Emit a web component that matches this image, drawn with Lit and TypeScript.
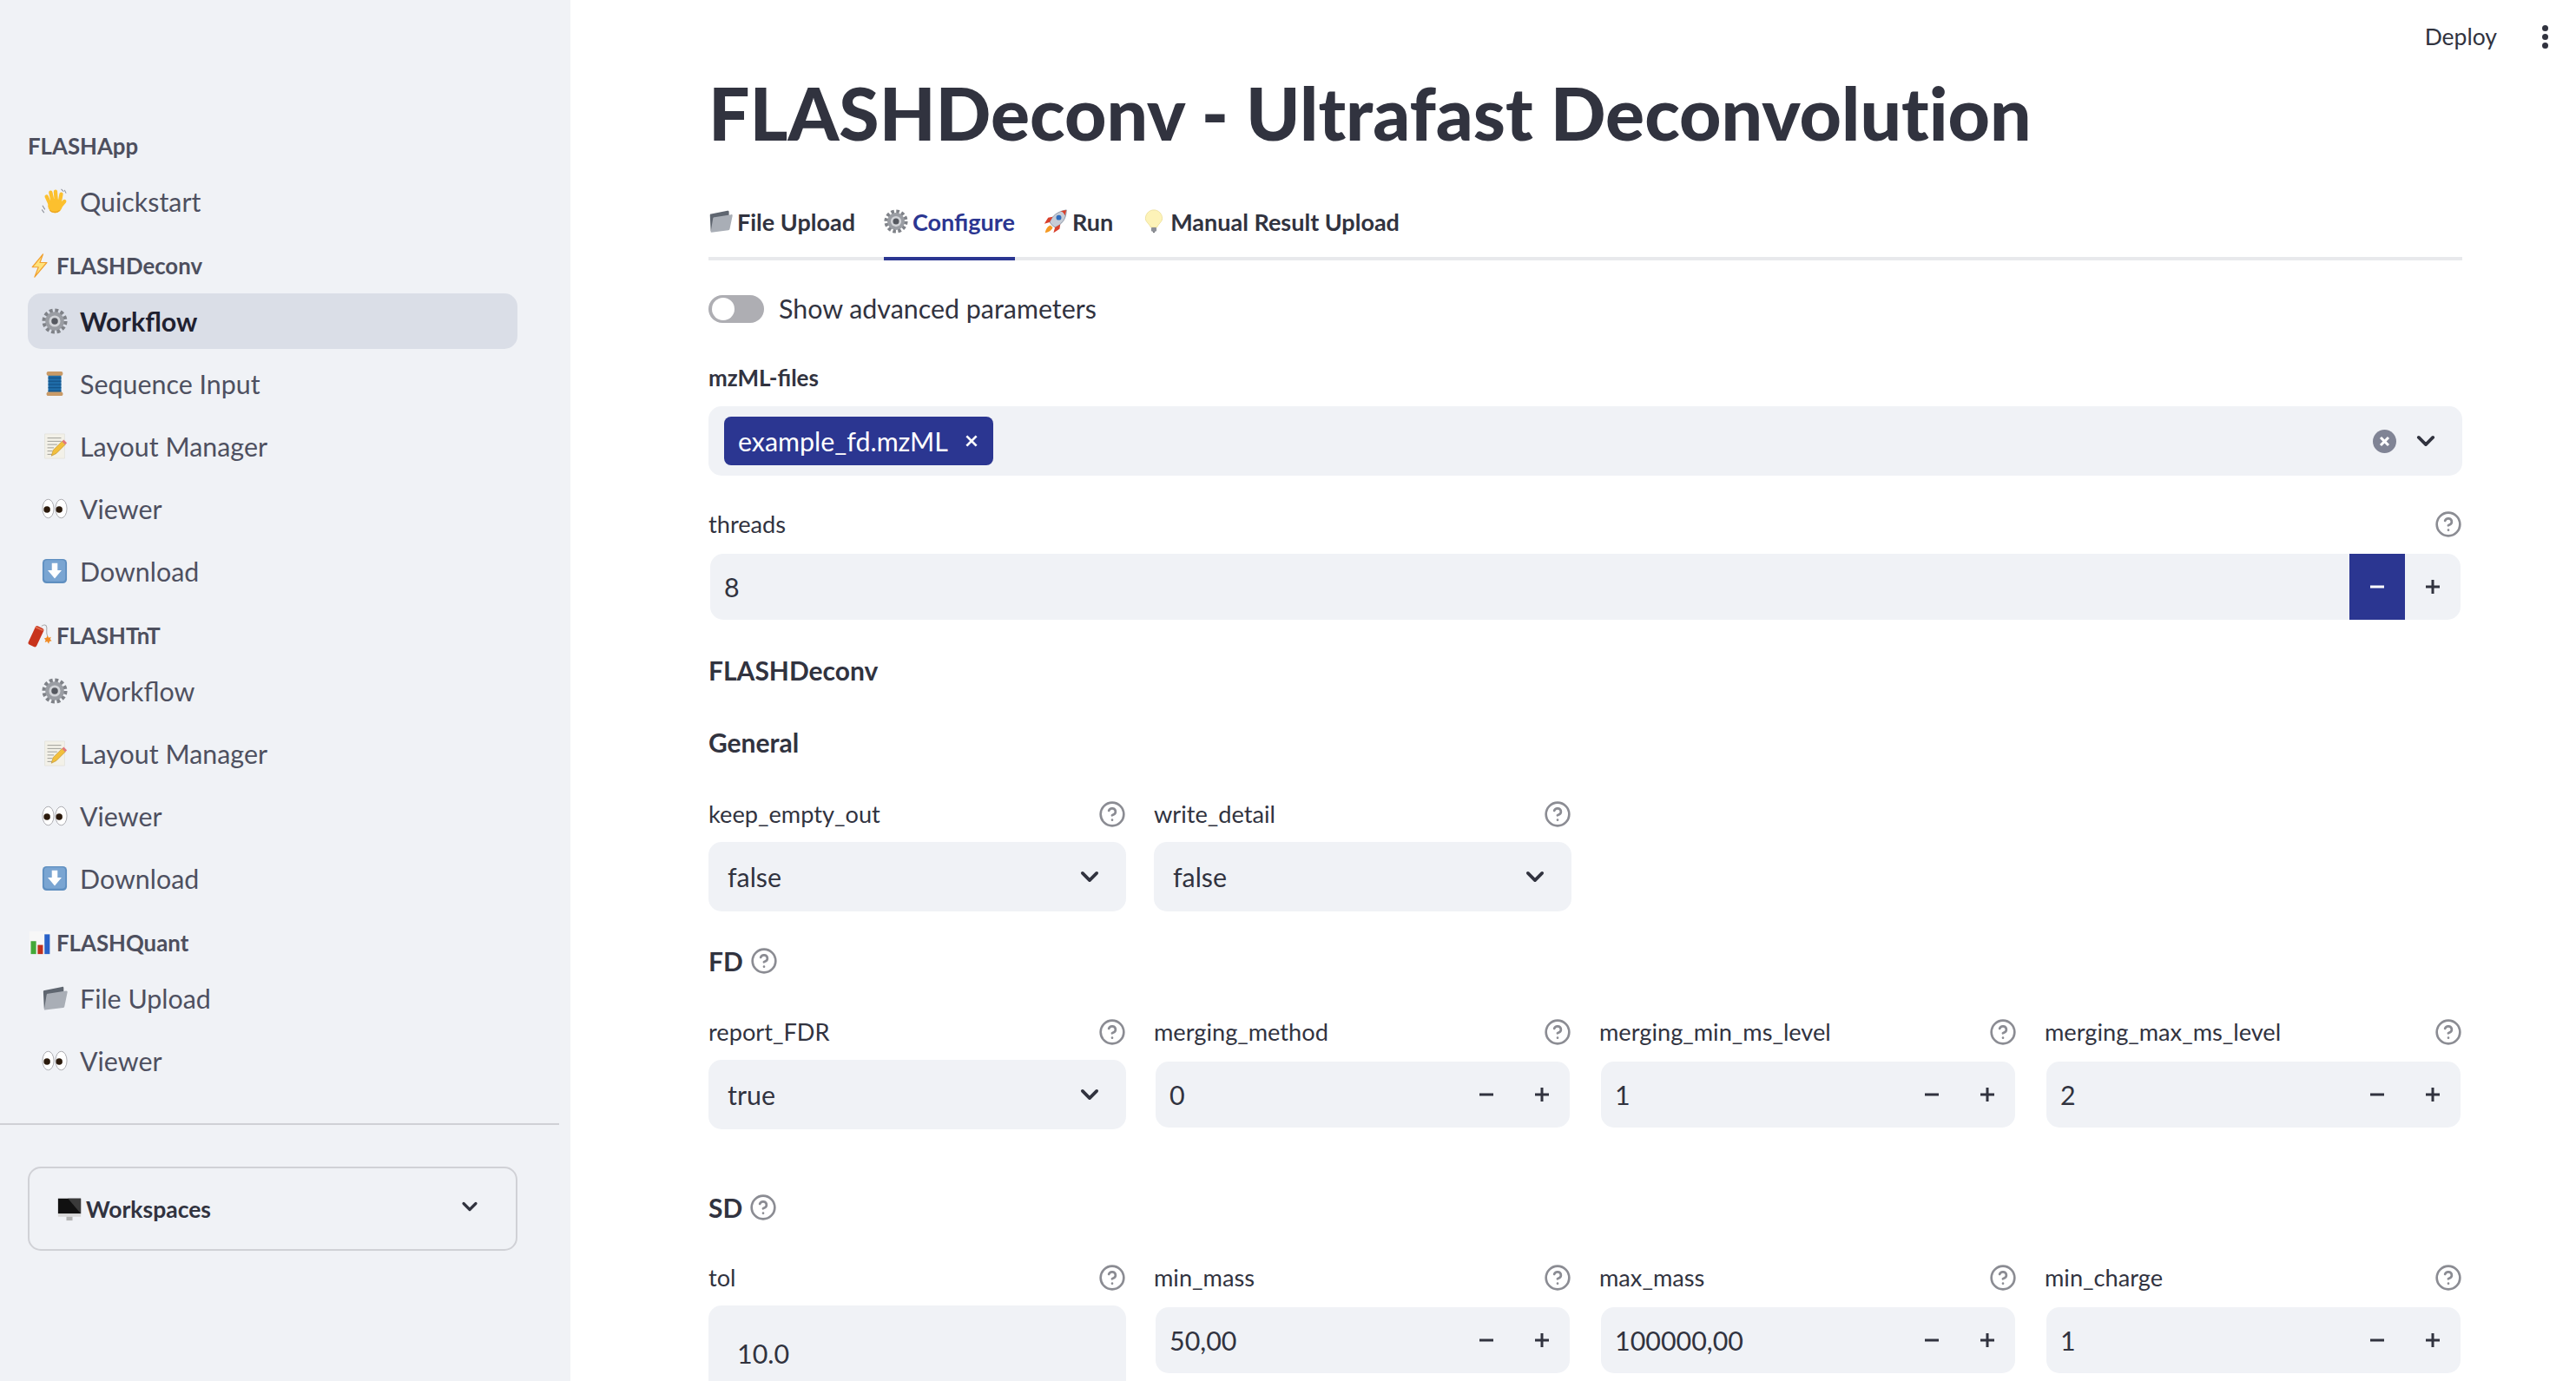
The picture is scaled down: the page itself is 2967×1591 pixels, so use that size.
import { LitElement, css, html, svg } from "lit";
import { customElement } from "lit/decorators.js";

// small drawings standing in for the colour emoji of the original page
const emojiShapes: Record<string, unknown> = {
  wave: svg`<g fill="none" stroke="#fcc02e" stroke-width="4.600" stroke-linecap="round">
      <path d="M11 21 6 10M14 18 11 5M18 17 17 4M22 18l2-11M23 22l5-6"></path>
    </g>
    <circle cx="16.500" cy="21.500" r="8.800" fill="#fcc02e"></circle>
    <path d="M10 27c3 3 9 3 12 0" stroke="#e8a020" stroke-width="1.200" fill="none"></path>
    <path d="M1 21l3 5M0 26l3 4M24 1l3 3M28 2l2 4" stroke="#8c8f99" stroke-width="1.100" fill="none"></path>`,
  bolt: svg`<path d="M20 1 6 18h8L9 31l16-19h-9l4-11Z" fill="#ffe27a" stroke="#f0a030" stroke-width="1.400" stroke-linejoin="round"/>`,
  gear: svg`<circle cx="16" cy="16" r="13" fill="none" stroke="#7f8288" stroke-width="5" stroke-dasharray="4 2.800"/><circle cx="16" cy="16" r="11.500" fill="#9a9da3"/><circle cx="16" cy="16" r="7" fill="#d2d4d8"/><circle cx="16" cy="16" r="4" fill="#55585f"/>`,
  spool: svg`<rect x="8" y="5" width="16" height="23" fill="#1f6ca8"/><path d="M8 9h16M8 13h16M8 17h16M8 21h16M8 25h16" stroke="#124d80" stroke-width="1"/><rect x="6" y="1" width="20" height="5" rx="2" fill="#c99a66"/><rect x="6" y="26" width="20" height="5" rx="2" fill="#c99a66"/>`,
  memo: svg`<rect x="4" y="1" width="24" height="30" fill="#f3f1e8" stroke="#dcdbd2" stroke-width=".6"/><path d="M7 6h17M7 10h17M7 14h12M7 18h8M7 22h6M7 26h8" stroke="#9a9a94" stroke-width="1"/><path d="M12 28l2-7L25 10l4 4-11 11-6 3Z" fill="#f2bf3c" stroke="#b48a2a" stroke-width=".6"/><path d="M25 10l2-2 4 4-2 2Z" fill="#e2787a"/>`,
  eyes: svg`<ellipse cx="8" cy="16" rx="7" ry="11.500" fill="#fff" stroke="#a9a9ad" stroke-width="1"/><ellipse cx="24" cy="16" rx="7" ry="11.500" fill="#fff" stroke="#a9a9ad" stroke-width="1"/><circle cx="6.500" cy="17" r="4" fill="#2b1a0c"/><circle cx="21.500" cy="17" r="4" fill="#2b1a0c"/>`,
  down: svg`<rect x="1" y="1" width="30" height="30" rx="5" fill="#5f8fc0"/><rect x="3" y="2.500" width="26" height="26" rx="4" fill="#7aa5d2"/><path d="M12.500 6h7v9h5L16 25 7.500 15h5Z" fill="#fff"/>`,
  dynamite: svg`<rect x="5" y="4" width="12" height="27" rx="3" fill="#c8341c" transform="rotate(25 11 17)"/><path d="M11 4l10 4.500" stroke="#e27050" stroke-width="2" transform="translate(-1 1)"/><path d="M18 4c3-3 7-2 7 2s-1 7 1 11" stroke="#a8a8a8" stroke-width="1.200" fill="none"/><path d="M26 16l1.500 3 3-1-1 3 2 2-3 1-1 3-2-3-3 1 1-3-2-2 3-1Z" fill="#f08a24"/>`,
  chart: svg`<rect x="2" y="1" width="28" height="30" fill="#f7f7f7"/><rect x="4" y="14" width="7" height="17" fill="#43a838"/><rect x="13" y="19" width="7" height="12" fill="#c0301e"/><rect x="22" y="5" width="7" height="26" fill="#2a62c8"/>`,
  folder: svg`<path d="M3 29 2 8c0-1 .6-1.600 1.500-1.600L25 2c1.500-.2 2 .5 2 1.500L27 8 3 29Z" fill="#5f6670"/><path d="M3 30 6 12c.2-1 1-1.500 2-1.500L30 7c1.300-.1 1.800.7 1.600 1.800L28 26c-.2 1-.8 1.500-1.800 1.700L4 30.500c-.7 0-1-.2-1-.5Z" fill="#a9aeb6"/>`,
  desktop: svg`<rect x="1" y="2" width="30" height="20" fill="#111"/><path d="M14 2h17v20Z" fill="#3a3a3a"/><rect x="1" y="22" width="30" height="4" fill="#d8d8d8"/><rect x="12" y="26" width="8" height="5" fill="#b4b4b4"/>`,
  rocket: svg`<path d="M11 21 8 17C11 9 18 3 30 1c0 12-6 19-15 23Z" fill="#c6ccd6" stroke="#6f7a8e" stroke-width=".8"/><path d="M22 2.500c3 .5 5 2.500 6 6L30 1Z" fill="#d8402c"/><circle cx="20" cy="11" r="3.400" fill="#2f6cbc"/><path d="M8 17l-7 2 5-8 6-1ZM15 24l-2 7 8-5 1-6Z" fill="#d8402c"/><path d="M9 21c-3 1-6 4-7 10 6-1 9-4 10-7Z" fill="#f59a23"/>`,
  bulb: svg`<path d="M16 1C10 1 5 6 5 12c0 5 5 7 7 12h8c2-5 7-7 7-12 0-6-5-11-11-11Z" fill="#fdf3b8" stroke="#e8d88a" stroke-width=".8"/><rect x="12.500" y="24" width="7" height="5" rx="1" fill="#8d9097"/><path d="M14 29h4l-2 2.500Z" fill="#55585f"/>`,
};

const emoji = (name: string) => html`<svg class="emoji" viewBox="0 0 32 32">${emojiShapes[name]}</svg>`;

const helpIcon = html`<svg class="help" viewBox="0 0 24 24" fill="none" stroke="#8b8c93" stroke-width="2" stroke-linecap="round" stroke-linejoin="round">
  <circle cx="12" cy="12" r="10"></circle>
  <path d="M9.090 9a3 3 0 0 1 5.830 1c0 2-3 3-3 3"></path>
  <line x1="12" y1="17" x2="12.010" y2="17"></line>
</svg>`;

const chevron = html`<svg class="chevron" viewBox="0 0 24 24" fill="none" stroke="#31333f" stroke-width="3.200" stroke-linecap="round" stroke-linejoin="round">
  <path d="M5 8.500l7 7 7-7"></path>
</svg>`;

const NAV = [
  { title: "FLASHApp", items: [["wave", "Quickstart"]] },
  {
    title: "FLASHDeconv",
    icon: "bolt",
    items: [
      ["gear", "Workflow", true],
      ["spool", "Sequence Input"],
      ["memo", "Layout Manager"],
      ["eyes", "Viewer"],
      ["down", "Download"],
    ],
  },
  {
    title: "FLASHTnT",
    icon: "dynamite",
    items: [
      ["gear", "Workflow"],
      ["memo", "Layout Manager"],
      ["eyes", "Viewer"],
      ["down", "Download"],
    ],
  },
  {
    title: "FLASHQuant",
    icon: "chart",
    items: [
      ["folder", "File Upload"],
      ["eyes", "Viewer"],
    ],
  },
];

const TABS = [
  ["folder", "File Upload"],
  ["gear", "Configure", true],
  ["rocket", "Run"],
  ["bulb", "Manual Result Upload"],
];

@customElement("app-root")
export class AppRoot extends LitElement {
  static styles = css`
    :host {
      display: flex;
      width: 2967px;
      height: 1591px;
      overflow: hidden;
      position: relative;
      background: #fff;
      color: #31333f;
      font-family: "Lato", "Noto Sans", sans-serif;
      font-size: 30.400px;
    }

    .emoji {
      width: 30px;
      height: 30px;
      flex: none;
    }

    /* sidebar */
    .sidebar {
      width: 657px;
      flex: none;
      background: #f0f2f6;
      box-sizing: border-box;
      padding-top: 143px;
    }

    .nav {
      padding: 0 61px 0 32px;
      display: flex;
      flex-direction: column;
    }

    .group {
      height: 50px;
      margin: 9px 0 7px;
      display: flex;
      align-items: center;
      gap: 5px;
      font-size: 25.800px;
      font-weight: 700;
      color: #4d4f5e;
    }

    .group:first-child {
      margin-top: 0;
    }

    .group .emoji {
      width: 28px;
      height: 30px;
    }

    .item {
      height: 64px;
      margin-bottom: 8px;
      border-radius: 15px;
      padding-left: 16px;
      display: flex;
      align-items: center;
      gap: 14px;
      color: #4e5060;
    }

    .item.active {
      background: #dadee7;
      color: #1f2130;
      font-weight: 700;
    }

    .divider {
      height: 2px;
      width: 644px;
      margin-top: 32px;
      background: #cfd0d5;
    }

    .workspaces {
      margin: 48px 61px 0 32px;
      height: 97px;
      box-sizing: border-box;
      border: 2px solid #d0d1d6;
      border-radius: 15px;
      padding: 0 41px 0 32px;
      display: flex;
      align-items: center;
      gap: 5px;
      font-size: 26.500px;
      font-weight: 700;
    }

    .workspaces .emoji {
      width: 28px;
      height: 30px;
    }

    .workspaces span {
      flex: 1;
    }

    .workspaces .chevron {
      width: 24px;
      height: 24px;
      margin-bottom: 6px;
    }

    /* top right */
    .toolbar {
      position: absolute;
      top: 22px;
      right: 32px;
      height: 40px;
      display: flex;
      align-items: center;
      gap: 52px;
      font-size: 26.500px;
    }

    .kebab {
      display: flex;
      flex-direction: column;
      gap: 3px;
    }

    .kebab i {
      width: 7px;
      height: 7px;
      border-radius: 50%;
      background: #31333f;
    }

    /* main */
    .main {
      flex: 1;
      min-width: 0;
      padding: 80px 131px 0 159px;
    }

    h1 {
      margin: 0;
      height: 100px;
      line-height: 100px;
      font-size: 84px;
      font-weight: 900;
      font-variant-ligatures: none;
      white-space: nowrap;
    }

    .tabs {
      margin-top: 36px;
      height: 84px;
      box-sizing: border-box;
      border-bottom: 4px solid #e8e9ec;
      display: flex;
      gap: 33px;
      font-size: 27px;
      font-weight: 700;
    }

    .tab {
      height: 84px;
      box-sizing: border-box;
      display: flex;
      align-items: center;
      gap: 5px;
      padding-bottom: 2px;
      border-bottom: 4px solid transparent;
    }

    .tab.active {
      color: #2b3691;
      border-bottom-color: #2b3691;
    }

    .tab .emoji {
      width: 28px;
      height: 28px;
    }

    .toggle-row {
      margin-top: 40px;
      height: 32px;
      display: flex;
      align-items: center;
      gap: 17px;
    }

    .toggle-row span {
      padding-bottom: 2px;
    }

    .toggle {
      width: 64px;
      height: 32px;
      border-radius: 16px;
      background: #aeaeb3;
      box-sizing: border-box;
      padding: 3px 4px;
    }

    .toggle i {
      display: block;
      width: 26px;
      height: 26px;
      border-radius: 50%;
      background: #fff;
    }

    .field {
      min-width: 0;
    }

    .multi {
      margin-top: 48px;
    }

    .threads {
      margin-top: 40px;
    }

    .label {
      height: 32px;
      margin-bottom: 16px;
      display: flex;
      align-items: center;
      justify-content: space-between;
      font-size: 27.200px;
    }

    .label span {
      padding-bottom: 2px;
    }

    .label.strong {
      font-weight: 700;
      font-size: 26px;
    }

    .help {
      width: 32px;
      height: 32px;
      flex: none;
    }

    .box {
      height: 80px;
      box-sizing: border-box;
      background: #f0f2f6;
      border-radius: 15px;
      display: flex;
      align-items: center;
    }

    .select {
      padding: 0 28px 0 22px;
      justify-content: space-between;
    }

    .chevron {
      width: 28px;
      height: 28px;
      flex: none;
    }

    .multi .box {
      padding: 0 28px 0 18px;
    }

    .chip {
      height: 56px;
      box-sizing: border-box;
      padding: 0 16px;
      display: flex;
      align-items: center;
      gap: 18px;
      border-radius: 8px;
      background: #2b3691;
      color: #fff;
    }

    .chip svg {
      width: 18px;
      height: 18px;
    }

    .spacer {
      flex: 1;
    }

    .clear {
      width: 27px;
      height: 27px;
      margin-right: 20px;
    }

    .stepper-wrap {
      height: 80px;
      padding: 2px;
      box-sizing: border-box;
    }

    .stepper {
      height: 76px;
      background: #f0f2f6;
      border-radius: 15px;
      overflow: hidden;
      display: flex;
      align-items: center;
      padding-left: 16px;
    }

    .stepper span {
      flex: 1;
    }

    .step {
      width: 64px;
      height: 76px;
      flex: none;
      display: flex;
      align-items: center;
      justify-content: center;
    }

    .step svg {
      width: 18px;
      height: 18px;
    }

    .step.hot {
      background: #2b3691;
      color: #fff;
    }

    .heading {
      height: 40px;
      display: flex;
      align-items: center;
      gap: 8px;
      font-weight: 700;
      font-size: 30px;
    }

    .deconv {
      margin-top: 36px;
    }

    .general {
      margin-top: 43px;
    }

    .fd {
      margin-top: 37px;
    }

    .sd {
      margin-top: 70px;
    }

    .row {
      display: grid;
      grid-template-columns: repeat(4, 481px);
      gap: 32px;
    }

    .row-general {
      margin-top: 47px;
    }

    .row-fd {
      margin-top: 46px;
    }

    .row-sd {
      margin-top: 45px;
    }

    .tol {
      height: 130px;
      background: #f0f2f6;
      border-radius: 15px;
      box-sizing: border-box;
      padding: 38px 0 0 33px;
      line-height: 34px;
    }
  `;

  private stepper(value: string, hot = false) {
    return html`<div class="stepper-wrap">
      <div class="stepper">
        <span>${value}</span>
        <div class="step ${hot ? "hot" : ""}">
          <svg viewBox="0 0 18 18"><rect x="1" y="7.500" width="16" height="3" fill="currentColor"></rect></svg>
        </div>
        <div class="step">
          <svg viewBox="0 0 18 18"><path d="M1 7.500h6.500V1h3v6.500H17v3h-6.500V17h-3v-6.500H1Z" fill="currentColor"></path></svg>
        </div>
      </div>
    </div>`;
  }

  private field(label: string, body: unknown) {
    return html`<div class="field">
      <div class="label"><span>${label}</span>${helpIcon}</div>
      ${body}
    </div>`;
  }

  private select(value: string) {
    return html`<div class="box select"><span>${value}</span>${chevron}</div>`;
  }

  private renderSidebar() {
    return html`<aside class="sidebar">
      <nav class="nav">
        ${NAV.map(
          (section) => html`<div class="group">
              ${section.icon ? emoji(section.icon) : ""}<span>${section.title}</span>
            </div>
            ${section.items.map(
              ([icon, text, active]) => html`<div class="item ${active ? "active" : ""}">
                ${emoji(icon as string)}<span>${text}</span>
              </div>`
            )}`
        )}
      </nav>
      <div class="divider"></div>
      <div class="workspaces">${emoji("desktop")}<span>Workspaces</span>${chevron}</div>
    </aside>`;
  }

  render() {
    return html`
      ${this.renderSidebar()}
      <main class="main">
        <h1>FLASHDeconv - Ultrafast Deconvolution</h1>

        <div class="tabs">
          ${TABS.map(
            ([icon, text, active]) => html`<div class="tab ${active ? "active" : ""}">
              ${emoji(icon as string)}<span>${text}</span>
            </div>`
          )}
        </div>

        <div class="toggle-row">
          <div class="toggle"><i></i></div>
          <span>Show advanced parameters</span>
        </div>

        <div class="field multi">
          <div class="label strong"><span>mzML-files</span></div>
          <div class="box">
            <div class="chip">
              <span>example_fd.mzML</span>
              <svg viewBox="0 0 16 16" stroke="#fff" stroke-width="2.400"><path d="M3 3l10 10M13 3 3 13"></path></svg>
            </div>
            <div class="spacer"></div>
            <svg class="clear" viewBox="0 0 27 27">
              <circle cx="13.500" cy="13.500" r="13.500" fill="#808495"></circle>
              <path d="M9 9l9 9M18 9l-9 9" stroke="#fff" stroke-width="3"></path>
            </svg>
            ${chevron}
          </div>
        </div>

        <div class="threads">${this.field("threads", this.stepper("8", true))}</div>

        <div class="heading deconv">FLASHDeconv</div>
        <div class="heading general">General</div>

        <div class="row row-general">
          ${this.field("keep_empty_out", this.select("false"))}
          ${this.field("write_detail", this.select("false"))}
        </div>

        <div class="heading fd">FD ${helpIcon}</div>
        <div class="row row-fd">
          ${this.field("report_FDR", this.select("true"))}
          ${this.field("merging_method", this.stepper("0"))}
          ${this.field("merging_min_ms_level", this.stepper("1"))}
          ${this.field("merging_max_ms_level", this.stepper("2"))}
        </div>

        <div class="heading sd">SD ${helpIcon}</div>
        <div class="row row-sd">
          ${this.field("tol", html`<div class="tol">10.0</div>`)}
          ${this.field("min_mass", this.stepper("50,00"))}
          ${this.field("max_mass", this.stepper("100000,00"))}
          ${this.field("min_charge", this.stepper("1"))}
        </div>
      </main>

      <div class="toolbar">
        <span>Deploy</span>
        <div class="kebab"><i></i><i></i><i></i></div>
      </div>
    `;
  }
}
